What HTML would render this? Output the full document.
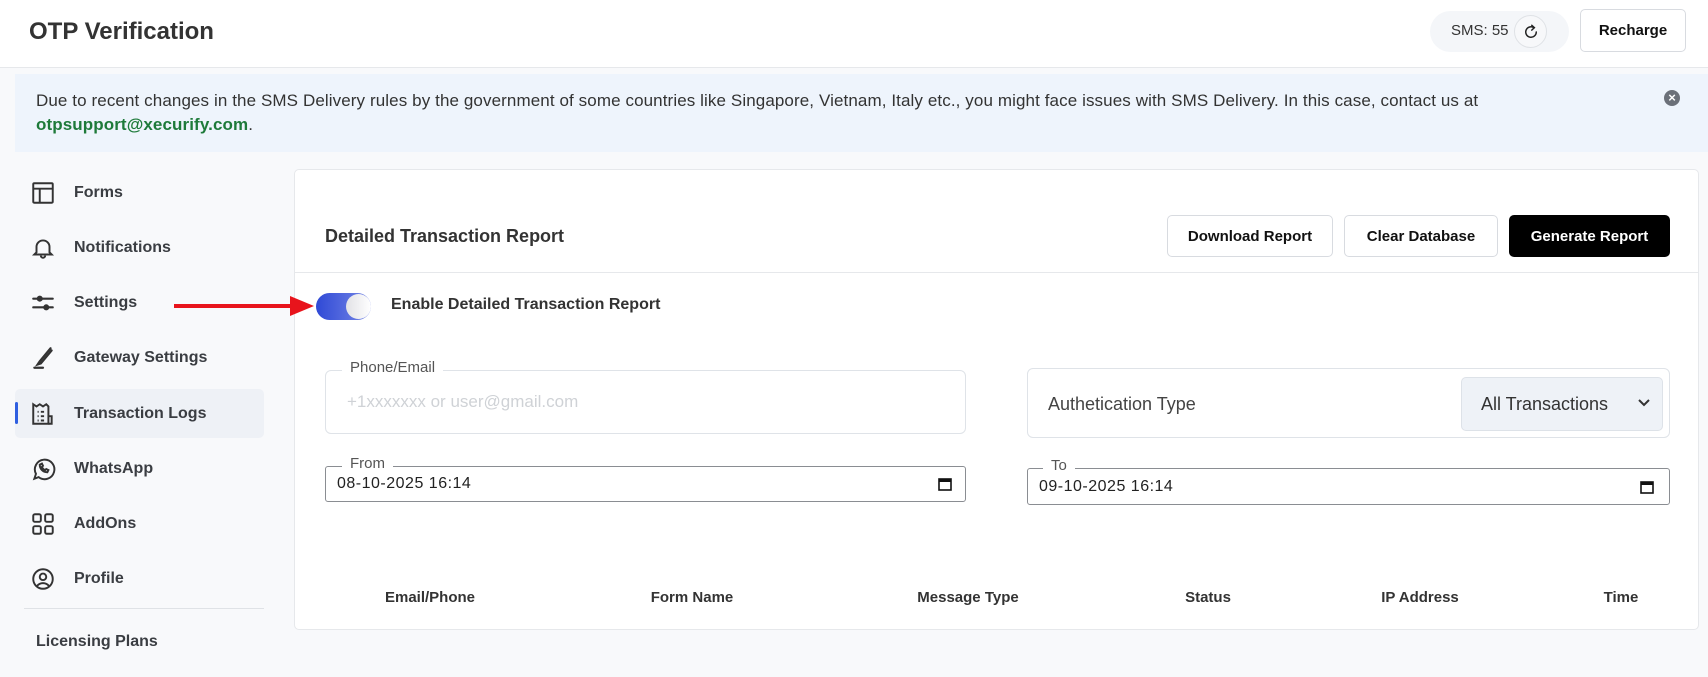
<!DOCTYPE html>
<html><head><meta charset="utf-8"><style>
*{box-sizing:border-box;margin:0;padding:0}
body{width:1708px;height:677px;overflow:hidden;background:#f8f9fb;font-family:"Liberation Sans",Arial,sans-serif;color:#333;position:relative}
.a{position:absolute}
.hdr{left:0;top:0;width:1708px;height:68px;background:#fff;border-bottom:1px solid #e6e8eb}
.btn{position:absolute;border:1px solid #d8dbe0;border-radius:5px;background:#fff;font-weight:bold;font-size:15px;color:#111;display:flex;align-items:center;justify-content:center}
.nav{position:absolute;left:30px;display:flex;align-items:center;font-size:16px;font-weight:bold;color:#3a3d42}
.nav svg{width:26px;height:26px;margin-right:18px}
.th{position:absolute;top:589px;font-size:15px;font-weight:bold;color:#333;transform:translateX(-50%)}
.fs{position:absolute;border:1px solid #dfe3e8;border-radius:6px}
.lg{position:absolute;background:#fff;padding:0 8px;font-size:15px;color:#555;line-height:16px}
</style></head><body>
<div class="a hdr"></div>
<div class="a" style="left:29px;top:18px;font-size:24px;font-weight:bold;color:#333">OTP Verification</div>
<div class="a" style="left:1430px;top:11px;width:139px;height:41px;background:#f4f6f9;border-radius:21px"></div>
<div class="a" style="left:1451px;top:22px;font-size:15px;color:#333">SMS: 55</div>
<div class="a" style="left:1514px;top:15px;width:33px;height:33px;border-radius:50%;border:1px solid #dfe2e6;background:#f7f8fa;display:flex;align-items:center;justify-content:center">
<svg width="18" height="18" viewBox="0 0 24 24" fill="none" stroke="#222" stroke-width="2" stroke-linecap="round"><path d="M19 12a7 7 0 1 1-3-5.7"/><path d="M13 3l3.5 3.2L13 9.5"/></svg></div>
<div class="btn" style="left:1580px;top:9px;width:106px;height:43px">Recharge</div>

<div class="a" style="left:15px;top:74px;width:1693px;height:78px;background:#eef4fc"></div>
<div class="a" style="left:36px;top:89px;font-size:17px;letter-spacing:0.1px;line-height:24px;color:#333;width:1620px">Due to recent changes in the SMS Delivery rules by the government of some countries like Singapore, Vietnam, Italy etc., you might face issues with SMS Delivery. In this case, contact us at<br><span style="color:#1e7a3a;font-weight:bold">otpsupport@xecurify.com</span>.</div>
<div class="a" style="left:1664px;top:90px;width:16px;height:16px;border-radius:50%;background:#6b7079;color:#fff;font-size:13px;font-weight:bold;line-height:16px;text-align:center">×</div>

<div class="a" style="left:15px;top:389px;width:249px;height:49px;background:#eef1f6;border-radius:5px"></div>
<div class="a" style="left:15px;top:402px;width:3px;height:22px;background:#2f5fe0;border-radius:2px"></div>
<div class="nav" style="top:180px"><svg viewBox="0 0 24 24" fill="none" stroke="#333" stroke-width="1.8"><rect x="3" y="3" width="18" height="18" rx="1"/><path d="M3 8h18M9 8v13"/></svg>Forms</div>
<div class="nav" style="top:235px"><svg viewBox="0 0 24 24" fill="none" stroke="#333" stroke-width="1.8"><path d="M6 16V11a6 6 0 0 1 12 0v5l2 2H4z"/><path d="M10 19a2 2 0 0 0 4 0"/></svg>Notifications</div>
<div class="nav" style="top:290px"><svg viewBox="0 0 24 24" fill="none" stroke="#333" stroke-width="2" stroke-linecap="round"><path d="M3 8h18M3 16h18"/><circle cx="9" cy="8" r="1.8" fill="#333"/><circle cx="15" cy="16" r="1.8" fill="#333"/></svg>Settings</div>
<div class="nav" style="top:345px"><svg viewBox="0 0 24 24" fill="none" stroke="#333" stroke-width="2" stroke-linecap="round"><path d="M19 3L9 15l-2 3 3-1L20 5"/><path d="M4 21h8"/></svg>Gateway Settings</div>
<div class="nav" style="top:401px"><svg viewBox="0 0 24 24" fill="none" stroke="#333" stroke-width="1.8"><path d="M3 3l3 2 3-2 3 2 3-2 2 2v16H3z"/><path d="M17 14h3v7h-3"/><path d="M7 10h1M10 10h3M7 14h1M10 14h3M7 18h1M10 18h3"/></svg>Transaction Logs</div>
<div class="nav" style="top:456px"><svg viewBox="0 0 24 24" fill="none" stroke="#333" stroke-width="1.8"><path d="M4 21l1.5-4.5A9 9 0 1 1 8 19.5z"/><path d="M9 8c0 4 3 7 7 7l1-2-2-1-1 1c-1.5-.5-2.5-1.5-3-3l1-1-1-2z"/></svg>WhatsApp</div>
<div class="nav" style="top:511px"><svg viewBox="0 0 24 24" fill="none" stroke="#333" stroke-width="1.8"><rect x="3" y="3" width="7" height="7" rx="1.5"/><rect x="14" y="3" width="7" height="7" rx="1.5"/><rect x="3" y="14" width="7" height="7" rx="1.5"/><rect x="14" y="14" width="7" height="7" rx="1.5"/></svg>AddOns</div>
<div class="nav" style="top:566px"><svg viewBox="0 0 24 24" fill="none" stroke="#333" stroke-width="1.8"><circle cx="12" cy="12" r="9"/><circle cx="12" cy="10" r="3"/><path d="M6.5 18.5a7 7 0 0 1 11 0"/></svg>Profile</div>
<div class="a" style="left:24px;top:608px;width:240px;height:1px;background:#dfe2e6"></div>
<div class="a" style="left:36px;top:633px;font-size:16px;font-weight:bold;color:#3a3d42">Licensing Plans</div>

<div class="a" style="left:294px;top:169px;width:1405px;height:461px;background:#fff;border:1px solid #e6e8eb;border-radius:5px"></div>
<div class="a" style="left:325px;top:226px;font-size:18px;font-weight:bold;color:#333">Detailed Transaction Report</div>
<div class="a" style="left:295px;top:272px;width:1403px;height:1px;background:#e6e8eb"></div>
<div class="btn" style="left:1167px;top:215px;width:166px;height:42px">Download Report</div>
<div class="btn" style="left:1344px;top:215px;width:154px;height:42px">Clear Database</div>
<div class="btn" style="left:1509px;top:215px;width:161px;height:42px;background:#000;border-color:#000;color:#fff">Generate Report</div>

<div class="a" style="left:174px;top:304px;width:120px;height:4px;background:#e8141c"></div>
<div class="a" style="left:290px;top:296px;width:0;height:0;border-top:10px solid transparent;border-bottom:10px solid transparent;border-left:24px solid #e8141c"></div>
<div class="a" style="left:316px;top:293px;width:55px;height:27px;border-radius:14px;background:linear-gradient(90deg,#2f49d6,#7788e6)"></div>
<div class="a" style="left:346px;top:294px;width:25px;height:25px;border-radius:50%;background:linear-gradient(90deg,#e2e2e6,#fff)"></div>
<div class="a" style="left:391px;top:296px;font-size:16px;font-weight:bold;color:#333">Enable Detailed Transaction Report</div>

<div class="fs" style="left:325px;top:370px;width:641px;height:64px"></div>
<div class="lg" style="left:342px;top:360px">Phone/Email</div>
<div class="a" style="left:347px;top:392px;font-size:17px;color:#cfd2d6">+1xxxxxxx or user@gmail.com</div>

<div class="fs" style="left:1027px;top:368px;width:643px;height:70px"></div>
<div class="a" style="left:1048px;top:394px;font-size:18px;color:#444">Authetication Type</div>
<div class="a" style="left:1461px;top:377px;width:202px;height:54px;background:#eef2f7;border:1px solid #dde2e8;border-radius:5px"></div>
<div class="a" style="left:1481px;top:394px;font-size:18px;color:#333">All Transactions</div>
<svg class="a" style="left:1637px;top:398px" width="14" height="10" viewBox="0 0 14 10" fill="none" stroke="#333" stroke-width="2"><path d="M2 2l5 5 5-5"/></svg>

<div class="a" style="left:325px;top:466px;width:641px;height:36px;border:1px solid #8a8d92;border-radius:3px"></div>
<div class="lg" style="left:342px;top:456px">From</div>
<div class="a" style="left:337px;top:475px;font-size:16px;color:#222;letter-spacing:.5px">08-10-2025 16:14</div>
<div class="a" style="left:1027px;top:468px;width:643px;height:37px;border:1px solid #8a8d92;border-radius:3px"></div>
<div class="lg" style="left:1043px;top:458px">To</div>
<div class="a" style="left:1039px;top:478px;font-size:16px;color:#222;letter-spacing:.5px">09-10-2025 16:14</div>
<svg class="a" style="left:938px;top:477px" width="14" height="14" viewBox="0 0 14 14"><rect x="1" y="2" width="12" height="11" fill="none" stroke="#111" stroke-width="1.6"/><rect x="1" y="2" width="12" height="3" fill="#111"/></svg>
<svg class="a" style="left:1640px;top:480px" width="14" height="14" viewBox="0 0 14 14"><rect x="1" y="2" width="12" height="11" fill="none" stroke="#111" stroke-width="1.6"/><rect x="1" y="2" width="12" height="3" fill="#111"/></svg>

<div class="th" style="left:430px">Email/Phone</div>
<div class="th" style="left:692px">Form Name</div>
<div class="th" style="left:968px">Message Type</div>
<div class="th" style="left:1208px">Status</div>
<div class="th" style="left:1420px">IP Address</div>
<div class="th" style="left:1621px">Time</div>
</body></html>
